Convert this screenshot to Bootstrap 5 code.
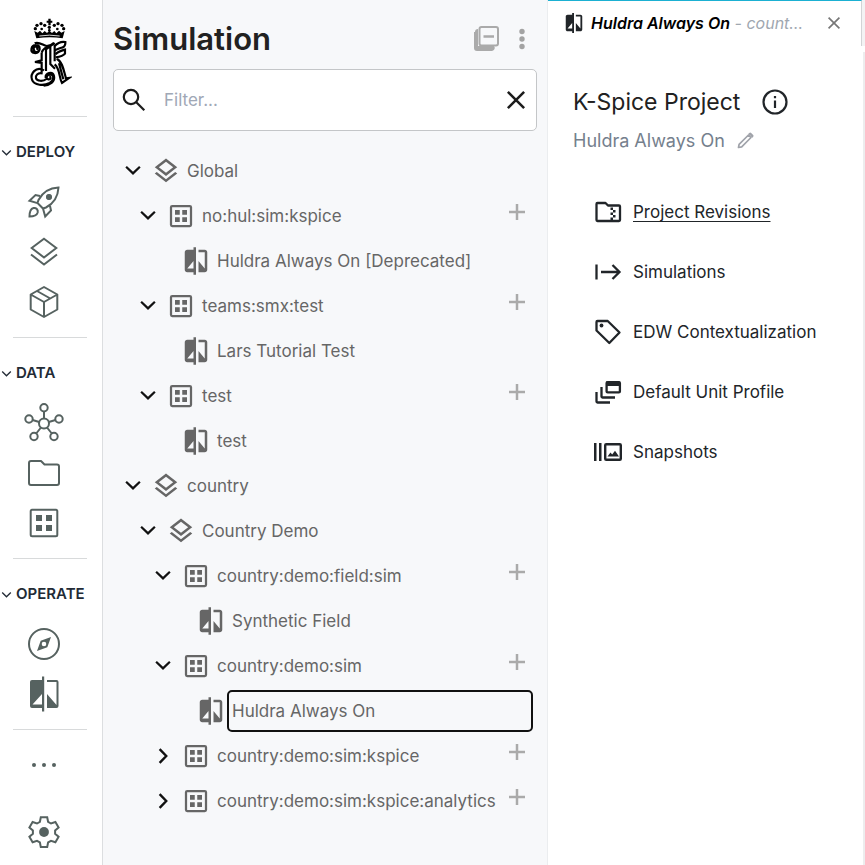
<!DOCTYPE html>
<html lang="en">
<head>
<meta charset="utf-8">
<meta name="viewport" content="width=device-width, initial-scale=1">
<title>Simulation</title>
<link href="https://cdn.jsdelivr.net/npm/bootstrap@5.3.0/dist/css/bootstrap.min.css" rel="stylesheet">
<style>
body{font-family:Inter,Roboto,"Liberation Sans",sans-serif;font-size:17px;line-height:24px;color:#212529;background:#fff}
svg{display:block;flex:none}
button{color:inherit}
.plain-btn{background:none;border:0;padding:0;display:flex;align-items:center;justify-content:center;flex:none}
.i30{width:30px;height:30px}
/* left rail */
.rail{width:103px;border-right:1px solid #dcdee0;color:#566260;padding:18px 14px 8px 0}
.rail hr{margin:10px 1px 10px 13px;border:0;border-top:1px solid #d8dadb;opacity:1}
.rail-logo{height:88px;padding-left:28px;color:#000}
.rail-head{height:50px;width:100%;padding-left:1px;gap:4px;font-size:15px;font-weight:600;color:#222b36;justify-content:flex-start}
.rail-item{height:50px;color:inherit}
.rail-item svg{width:40px;height:40px}
/* tree panel */
.tree-panel{width:445px;background:#f7f8fa;border-right:1px solid #ebedef;padding:16px 10px}
.tree-title{font-size:31px;line-height:46px;font-weight:600;color:#212121}
.filter-box{height:62px;margin-top:7px;border:1px solid #c4c6c8;border-radius:5px;background:#fff;padding:0 5px;color:#1c1c1c}
.filter-box input{border:0;outline:0;min-width:0;font-size:17px;color:#333;background:none;padding:0 15px}
.filter-box input::placeholder{color:#a0a8b6;opacity:1}
.tree{margin:17px 4px 0 5px}
.tree ul{padding-left:15px}
.tree-row{height:45px;gap:3px;color:#666}
.tree-row .toggler{color:#111}
.tree-row .toggler,.tree-row .spacer{width:30px;flex:none}
.tree-label{color:#666;text-decoration:none;margin-left:-2px;padding:9px 0 9px 5px;border-radius:5px;white-space:nowrap}
.tree-label.is-focused{outline:2px solid #111;outline-offset:-2px}
.add-btn{width:24px;height:24px;margin:0 4px 8px 4px;color:#aaa}
/* detail pane */
.tab-strip{height:46px;background:#f3f3f4}
.open-tab{background:#fff;border-top:1px solid #1bb0d2;margin-right:3px;padding:0 17px 1px 15px;border-right:1px solid #d2d4d6}
.open-tab .tab-text{font-size:16px;font-style:italic;color:#a0a7b0;margin:0 8px 0 6px}
.open-tab strong{font-weight:600;color:#000}
.pane{padding:35px 25px;border-right:2px solid #ededee;margin-top:6px}
.pane-title{font-size:23px;line-height:30px;font-weight:400;color:#212121}
.pane-info{margin-left:20px}
.pane-sub{font-size:18px;color:#75808d;margin-top:12px}
.pane-links{margin-top:29px;padding-left:20px}
.pane-links a{height:60px;gap:10px;color:#212529;text-decoration:none}
.pane-links a.current{text-decoration:underline;text-underline-offset:3px;text-decoration-thickness:1px}
</style>
</head>
<body>
<svg width="0" height="0" class="position-absolute" aria-hidden="true">
<defs>
<symbol id="down" viewBox="0 0 24 24"><path d="M6.500 8.600l5.500 5.300 5.500-5.300" fill="none" stroke="currentColor" stroke-width="1.800"/></symbol>
<symbol id="right" viewBox="0 0 24 24"><path d="M9.300 6.500l5.300 5.500-5.300 5.500" fill="none" stroke="currentColor" stroke-width="1.900"/></symbol>
<symbol id="layers" viewBox="0 0 24 24"><path fill="currentColor" d="M11.990 18.540l-7.370-5.730L3 14.070l9 7 9-7-1.630-1.270zM12 16l7.360-5.730L21 9l-9-7-9 7 1.630 1.270zm0-11.470L17.740 9 12 13.470 6.260 9z"/></symbol>
<symbol id="grid" viewBox="0 0 24 24"><rect x="4" y="4" width="16" height="16" rx="1" fill="none" stroke="currentColor" stroke-width="1.800"/><path fill="currentColor" d="M7.200 7.200H11V11H7.200zM13 7.200h3.800V11H13zM7.200 13H11v3.800H7.200zM13 13h3.800v3.800H13z"/></symbol>
<symbol id="compare" viewBox="0 0 24 24"><path fill="currentColor" d="M10 3H5c-1.100 0-2 .9-2 2v14c0 1.100.9 2 2 2h5v2h2V1h-2zm0 15H5l5-6zm9-15h-5v2h5v13l-5-6v9h5c1.100 0 2-.9 2-2V5c0-1.100-.9-2-2-2z"/></symbol>
<symbol id="plus" viewBox="0 0 24 24"><path d="M12 4v16M4 12h16" fill="none" stroke="currentColor" stroke-width="2.500"/></symbol>
<symbol id="cross" viewBox="0 0 24 24"><path d="M5.500 5.500l13 13M18.500 5.500l-13 13" fill="none" stroke="currentColor" stroke-width="2"/></symbol>
</defs>
</svg>

<div class="d-flex align-items-stretch min-vh-100">
  <nav class="rail d-flex flex-column flex-shrink-0" aria-label="Main">
    <a class="rail-logo" href="#" aria-label="Home">
      <svg width="44" height="70" viewBox="84 54 132 210" fill="none" stroke="currentColor" stroke-width="6.500">
        <g fill="currentColor" stroke="none">
          <path d="M145 56h7v6h5v6h-5v8h-7v-8h-5v-6h5z"/>
          <circle cx="134" cy="76" r="5"/><circle cx="123" cy="71" r="5"/><circle cx="111" cy="76" r="5"/><circle cx="106" cy="86" r="5"/>
          <circle cx="163" cy="76" r="5"/><circle cx="174" cy="71" r="5"/><circle cx="186" cy="76" r="5"/><circle cx="191" cy="86" r="5"/>
          <circle cx="148" cy="82" r="5"/><circle cx="148" cy="91" r="4"/><circle cx="125" cy="87" r="4"/><circle cx="172" cy="87" r="4"/>
          <path d="M103 93l10 5 7-6 7 8 7-7 7 6 7-7 8 7 7-6 6 7 8-8 7 6 10-5-6 22q-37-7-79 0z"/>
        </g>
        <path d="M118 108q30-5 61 0" stroke="#fff" stroke-width="2.500"/>
        <path d="M110 149c8-9-8-14-9-3 0 14 16 13 18 1 1-10-7-12-12-12-14 0-18 21-4 24 5 1 10-1 13-4M104 130c12-6 24 5 36 8 10 0 16-4 22-10"/>
        <path d="M125 158v23l-20 5 20 3v28M138 146v67M125 158c4-12 16-18 27-20M151 138v54l14 14M164 134v50M138 148l26-19"/>
        <path d="M164 138c10-11 20-14 32-12 1 12-5 17-15 18l-17 7M167 163c6-8 20-12 28-14v12c-6 8-14 9-28 11M170 176c18 9 22 39 28 59l9-1-21 15c-10-18-5-42-22-56M177 190l13 48"/>
        <path d="M132 211c-25-14-42 11-36 28 6 18 36 19 53 10 14-8 14-27 1-26-10 0-14 13-5 15 7 2 9-8 3-9M128 220c-16-3-22 7-20 15 2 9 22 10 31 2M137 233c-3-14 21-21 25-5 4 18-13 28-31 29"/>
      </svg>
    </a>
    <hr>
    <button class="plain-btn rail-head" type="button"><svg width="11" height="11" viewBox="0 0 11 11"><path d="M1.200 3.500l4.300 4.300 4.300-4.300" fill="none" stroke="currentColor" stroke-width="1.300"/></svg>DEPLOY</button>
    <button class="plain-btn rail-item" type="button" aria-label="Launch"><svg viewBox="0 0 40 40" fill="none" stroke="currentColor" stroke-width="2"><path d="M34.500 5.500c-9 .4-15.500 4-20 12.500l-1 3 5.500 5.500 3-1c8.500-4.500 12-11 12.500-20zM16 14l-4.500-1-6 5.800 8 2.300M26 24l1 4.500-5.800 6-2.200-8M5.500 34.500c0-4.500.5-7.500 4-8.500 2.700-.5 4.800 1.800 4.200 4.500-1 3.300-4 4-8.200 4z"/><circle cx="25" cy="15" r="2.700" fill="currentColor" stroke="none"/><circle cx="25" cy="15" r="2"/></svg></button>
    <button class="plain-btn rail-item" type="button" aria-label="Layers"><svg viewBox="0 0 40 40" fill="none" stroke="currentColor" stroke-width="2"><path d="M20 6.700l12.300 9.300L20 25.500 7.700 16zM7 22.500l13 10 13-10"/></svg></button>
    <button class="plain-btn rail-item" type="button" aria-label="Packages"><svg viewBox="0 0 40 40" fill="none" stroke="currentColor" stroke-width="2" stroke-linejoin="round"><path d="M20 5l13.300 7.500v15L20 35 6.700 27.500v-15zM6.700 12.500L20 20l13.300-7.500M20 20v15M13 9l13.300 7.500"/></svg></button>
    <hr>
    <button class="plain-btn rail-head" type="button"><svg width="11" height="11" viewBox="0 0 11 11"><path d="M1.200 3.500l4.300 4.300 4.300-4.300" fill="none" stroke="currentColor" stroke-width="1.300"/></svg>DATA</button>
    <button class="plain-btn rail-item" type="button" aria-label="Network"><svg viewBox="0 0 40 40" fill="none" stroke="currentColor" stroke-width="2"><circle cx="20" cy="20.500" r="5"/><circle cx="20" cy="4.800" r="3.700"/><circle cx="5" cy="16" r="3.700"/><circle cx="35" cy="16" r="3.700"/><circle cx="10" cy="33.500" r="3.700"/><circle cx="30" cy="33.500" r="3.700"/><path d="M20 8.500v7M8.500 17l6.700 2M31.500 17l-6.700 2M12.200 30.500l4.800-6M27.800 30.500l-4.800-6"/></svg></button>
    <button class="plain-btn rail-item" type="button" aria-label="Files"><svg viewBox="0 0 40 40" fill="none" stroke="currentColor" stroke-width="2" stroke-linejoin="round"><path d="M7 8h10l3.500 3.500H33a2 2 0 0 1 2 2V30a2 2 0 0 1-2 2H7a2 2 0 0 1-2-2V10a2 2 0 0 1 2-2z"/></svg></button>
    <button class="plain-btn rail-item" type="button" aria-label="Datasets"><svg viewBox="0 0 40 40"><rect x="6.700" y="6.700" width="26.600" height="26.600" rx="1.500" fill="none" stroke="currentColor" stroke-width="2"/><path fill="currentColor" d="M12 12h6v6h-6zM22 12h6v6h-6zM12 22h6v6h-6zM22 22h6v6h-6z"/></svg></button>
    <hr>
    <button class="plain-btn rail-head" type="button"><svg width="11" height="11" viewBox="0 0 11 11"><path d="M1.200 3.500l4.300 4.300 4.300-4.300" fill="none" stroke="currentColor" stroke-width="1.300"/></svg>OPERATE</button>
    <button class="plain-btn rail-item" type="button" aria-label="Explore"><svg viewBox="0 0 40 40"><circle cx="20" cy="20" r="15" fill="none" stroke="currentColor" stroke-width="2"/><path fill="currentColor" fill-rule="evenodd" d="M27 13l-3.700 10.300L13 27l3.700-10.300zM20 17.700a2.300 2.300 0 1 0 0 4.600 2.300 2.300 0 0 0 0-4.600z"/></svg></button>
    <button class="plain-btn rail-item" type="button" aria-label="Simulation"><svg viewBox="0 0 40 40"><path fill="currentColor" d="M18 6H8a2 2 0 0 0-2 2v24a2 2 0 0 0 2 2h10v3.500h2.200v-35H18zm0 24.500H8.500L18 20zM23 6h9.500a2 2 0 0 1 2 2v24a2 2 0 0 1-2 2H23V20l9.500 11V8H23z"/></svg></button>
    <hr>
    <button class="plain-btn rail-item" type="button" aria-label="More"><svg viewBox="0 0 40 40" fill="currentColor"><circle cx="10" cy="20" r="2"/><circle cx="20" cy="20" r="2"/><circle cx="30" cy="20" r="2"/></svg></button>
    <button class="plain-btn rail-item mt-auto" type="button" aria-label="Settings"><svg viewBox="0 0 40 40"><path fill="none" stroke="currentColor" stroke-width="2" d="M16.800 5.200h6.400l.9 4.600 2.900 1.700 4.400-1.500 3.200 5.500-3.500 3v3.300l3.500 3-3.200 5.500-4.400-1.500-2.900 1.700-.9 4.600h-6.400l-.9-4.600-2.900-1.700-4.400 1.500-3.200-5.500 3.500-3v-3.300l-3.500-3L8.600 10l4.400 1.500 2.900-1.700z"/><circle cx="20" cy="20" r="4.900" fill="currentColor"/></svg></button>
  </nav>

  <section class="tree-panel flex-shrink-0">
    <header class="d-flex align-items-center">
      <h1 class="tree-title mb-0 flex-grow-1">Simulation</h1>
      <button class="plain-btn i30" type="button" aria-label="Collapse all"><svg width="30" height="30" viewBox="0 0 30 30"><path fill="#aaa" d="M2 8a3 3 0 0 1 3-3v17h16a3 3 0 0 1-2 5H4a3 3 0 0 1-3-3V8z"/><rect x="6.500" y="3" width="18.500" height="18.500" rx="2" fill="#f7f8fa" stroke="#aaa" stroke-width="2"/><path d="M10.500 12.500h10.500" stroke="#aaa" stroke-width="2.500"/></svg></button>
      <button class="plain-btn i30 ms-1" type="button" aria-label="Options"><svg width="30" height="30" viewBox="0 0 30 30" fill="#a3a3a3"><circle cx="15" cy="7.500" r="2.700"/><circle cx="15" cy="15" r="2.700"/><circle cx="15" cy="22.500" r="2.700"/></svg></button>
    </header>
    <div class="filter-box d-flex align-items-center">
      <svg width="30" height="30" viewBox="0 0 30 30" fill="none" stroke="currentColor" stroke-width="2.200"><circle cx="12" cy="12" r="7.200"/><path d="M17.300 17.300l8 8"/></svg>
      <input type="text" class="flex-grow-1" placeholder="Filter..." aria-label="Filter">
      <button class="plain-btn i30" type="button" aria-label="Clear"><svg width="30" height="30"><use href="#cross"/></svg></button>
    </div>

    <ul class="tree list-unstyled mb-0">
      <li>
        <div class="tree-row d-flex align-items-center"><button class="plain-btn toggler" type="button" aria-label="Collapse"><svg class="i30"><use href="#down"/></svg></button><svg class="i30"><use href="#layers"/></svg><a class="tree-label flex-grow-1" href="#">Global</a></div>
        <ul class="list-unstyled">
          <li>
            <div class="tree-row d-flex align-items-center"><button class="plain-btn toggler" type="button" aria-label="Collapse"><svg class="i30"><use href="#down"/></svg></button><svg class="i30"><use href="#grid"/></svg><a class="tree-label flex-grow-1" href="#">no:hul:sim:kspice</a><button class="plain-btn add-btn" type="button" aria-label="Add"><svg width="24" height="24"><use href="#plus"/></svg></button></div>
            <ul class="list-unstyled"><li class="tree-row d-flex align-items-center"><span class="spacer"></span><svg class="i30"><use href="#compare"/></svg><a class="tree-label flex-grow-1" href="#">Huldra Always On [Deprecated]</a></li></ul>
          </li>
          <li>
            <div class="tree-row d-flex align-items-center"><button class="plain-btn toggler" type="button" aria-label="Collapse"><svg class="i30"><use href="#down"/></svg></button><svg class="i30"><use href="#grid"/></svg><a class="tree-label flex-grow-1" href="#">teams:smx:test</a><button class="plain-btn add-btn" type="button" aria-label="Add"><svg width="24" height="24"><use href="#plus"/></svg></button></div>
            <ul class="list-unstyled"><li class="tree-row d-flex align-items-center"><span class="spacer"></span><svg class="i30"><use href="#compare"/></svg><a class="tree-label flex-grow-1" href="#">Lars Tutorial Test</a></li></ul>
          </li>
          <li>
            <div class="tree-row d-flex align-items-center"><button class="plain-btn toggler" type="button" aria-label="Collapse"><svg class="i30"><use href="#down"/></svg></button><svg class="i30"><use href="#grid"/></svg><a class="tree-label flex-grow-1" href="#">test</a><button class="plain-btn add-btn" type="button" aria-label="Add"><svg width="24" height="24"><use href="#plus"/></svg></button></div>
            <ul class="list-unstyled"><li class="tree-row d-flex align-items-center"><span class="spacer"></span><svg class="i30"><use href="#compare"/></svg><a class="tree-label flex-grow-1" href="#">test</a></li></ul>
          </li>
        </ul>
      </li>
      <li>
        <div class="tree-row d-flex align-items-center"><button class="plain-btn toggler" type="button" aria-label="Collapse"><svg class="i30"><use href="#down"/></svg></button><svg class="i30"><use href="#layers"/></svg><a class="tree-label flex-grow-1" href="#">country</a></div>
        <ul class="list-unstyled">
          <li>
            <div class="tree-row d-flex align-items-center"><button class="plain-btn toggler" type="button" aria-label="Collapse"><svg class="i30"><use href="#down"/></svg></button><svg class="i30"><use href="#layers"/></svg><a class="tree-label flex-grow-1" href="#">Country Demo</a></div>
            <ul class="list-unstyled">
              <li>
                <div class="tree-row d-flex align-items-center"><button class="plain-btn toggler" type="button" aria-label="Collapse"><svg class="i30"><use href="#down"/></svg></button><svg class="i30"><use href="#grid"/></svg><a class="tree-label flex-grow-1" href="#">country:demo:field:sim</a><button class="plain-btn add-btn" type="button" aria-label="Add"><svg width="24" height="24"><use href="#plus"/></svg></button></div>
                <ul class="list-unstyled"><li class="tree-row d-flex align-items-center"><span class="spacer"></span><svg class="i30"><use href="#compare"/></svg><a class="tree-label flex-grow-1" href="#">Synthetic Field</a></li></ul>
              </li>
              <li>
                <div class="tree-row d-flex align-items-center"><button class="plain-btn toggler" type="button" aria-label="Collapse"><svg class="i30"><use href="#down"/></svg></button><svg class="i30"><use href="#grid"/></svg><a class="tree-label flex-grow-1" href="#">country:demo:sim</a><button class="plain-btn add-btn" type="button" aria-label="Add"><svg width="24" height="24"><use href="#plus"/></svg></button></div>
                <ul class="list-unstyled"><li class="tree-row d-flex align-items-center"><span class="spacer"></span><svg class="i30"><use href="#compare"/></svg><a class="tree-label is-focused flex-grow-1" href="#">Huldra Always On</a></li></ul>
              </li>
              <li class="tree-row d-flex align-items-center"><button class="plain-btn toggler" type="button" aria-label="Expand"><svg class="i30"><use href="#right"/></svg></button><svg class="i30"><use href="#grid"/></svg><a class="tree-label flex-grow-1" href="#">country:demo:sim:kspice</a><button class="plain-btn add-btn" type="button" aria-label="Add"><svg width="24" height="24"><use href="#plus"/></svg></button></li>
              <li class="tree-row d-flex align-items-center"><button class="plain-btn toggler" type="button" aria-label="Expand"><svg class="i30"><use href="#right"/></svg></button><svg class="i30"><use href="#grid"/></svg><a class="tree-label flex-grow-1" href="#">country:demo:sim:kspice:analytics</a><button class="plain-btn add-btn" type="button" aria-label="Add"><svg width="24" height="24"><use href="#plus"/></svg></button></li>
            </ul>
          </li>
        </ul>
      </li>
    </ul>
  </section>

  <main class="d-flex flex-column flex-grow-1 overflow-hidden">
    <div class="tab-strip d-flex">
      <div class="open-tab d-flex align-items-center flex-grow-1">
        <svg width="22" height="22"><use href="#compare"/></svg>
        <span class="tab-text text-nowrap flex-grow-1"><strong>Huldra Always On</strong> - count…</span>
        <button class="plain-btn" type="button" aria-label="Close tab"><svg width="20" height="20" viewBox="0 0 24 24" style="color:#777"><use href="#cross"/></svg></button>
      </div>
    </div>
    <div class="pane flex-grow-1">
      <div class="d-flex align-items-center">
        <h2 class="pane-title mb-0">K-Spice Project</h2>
        <button class="plain-btn i30 pane-info" type="button" aria-label="Project information"><svg width="30" height="30" viewBox="0 0 30 30"><circle cx="15" cy="15" r="11.500" fill="none" stroke="currentColor" stroke-width="2.200"/><path fill="currentColor" d="M13.900 9h2.200v2.300h-2.200zM13.900 13.500h2.200v7.500h-2.200z"/></svg></button>
      </div>
      <div class="pane-sub d-flex align-items-center">
        <span>Huldra Always On</span>
        <button class="plain-btn ms-2" type="button" aria-label="Rename"><svg width="24" height="24" viewBox="0 0 24 24" fill="none" stroke="#a0a3aa" stroke-width="1.700" stroke-linejoin="round"><path d="M5.500 18.500l.6-3.200L15.500 6l2.500 2.500-9.300 9.400z"/><path d="M16 5.500l1.300-.7 2 2-.8 1.200" stroke-width="2.500"/></svg></button>
      </div>
      <nav class="pane-links d-flex flex-column" aria-label="Project">
        <a class="current d-flex align-items-center" href="#"><svg class="i30" viewBox="0 0 30 30"><path fill="none" stroke="currentColor" stroke-width="2.300" stroke-linejoin="round" d="M4.500 6h8l2.500 2.500h11a1 1 0 0 1 1 1V23a1 1 0 0 1-1 1H4.500a1 1 0 0 1-1-1V7a1 1 0 0 1 1-1z"/><path fill="currentColor" d="M17.500 10.500H20V13h-2.500zM20 13h2.500v2.500H20zM17.500 15.500H20V18h-2.500zM20 18h2.500v2.500H20zM17.500 20.500H20V23h-2.500z"/></svg>Project Revisions</a>
        <a class="d-flex align-items-center" href="#"><svg class="i30" viewBox="0 0 30 30" fill="none" stroke="currentColor" stroke-width="2.300"><path d="M3.500 7.500v15M8 15h18.500M19.500 8l7 7-7 7"/></svg>Simulations</a>
        <a class="d-flex align-items-center" href="#"><svg class="i30" viewBox="0 0 30 30"><path fill="none" stroke="currentColor" stroke-width="2.300" stroke-linejoin="round" d="M4.500 4h10.200L26.500 15.500 16.300 26 3.500 13.500V5a1 1 0 0 1 1-1z"/><circle cx="8.500" cy="8.500" r="1.900" fill="currentColor"/></svg>EDW Contextualization</a>
        <a class="d-flex align-items-center" href="#"><svg class="i30" viewBox="0 0 30 30"><path fill="none" stroke="currentColor" stroke-width="2.300" d="M3.500 15v9.500a1 1 0 0 0 1 1H17M8.500 10v9.500a1 1 0 0 0 1 1H22"/><rect x="13.600" y="5.100" width="13.300" height="10.300" rx="1" fill="none" stroke="currentColor" stroke-width="2.300"/><path fill="currentColor" d="M13 4.500h14V9H13z"/></svg>Default Unit Profile</a>
        <a class="d-flex align-items-center" href="#"><svg class="i30" viewBox="0 0 30 30"><path fill="currentColor" d="M1 6h2.500v18H1zM6 6h2.500v18H6z"/><rect x="12.200" y="7.200" width="15.600" height="15.600" rx="1" fill="none" stroke="currentColor" stroke-width="2.400"/><path fill="currentColor" d="M14.500 19.500l3-4 1.700 2 2.800-3.700 4 5.700z"/></svg>Snapshots</a>
      </nav>
    </div>
  </main>
</div>
<script src="https://cdn.jsdelivr.net/npm/bootstrap@5.3.0/dist/js/bootstrap.bundle.min.js"></script>
</body>
</html>
